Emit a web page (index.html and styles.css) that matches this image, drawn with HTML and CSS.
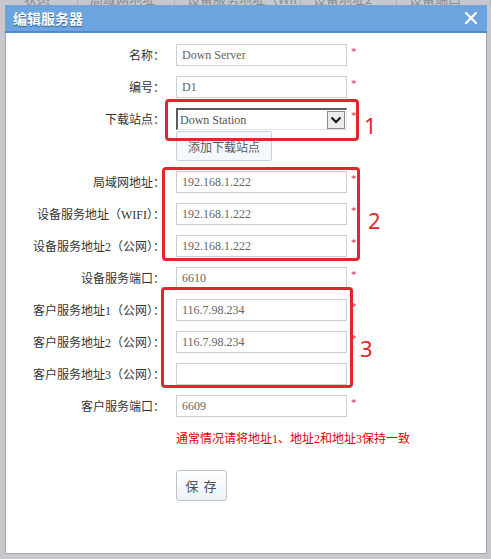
FILE: index.html
```html
<!DOCTYPE html>
<html lang="zh-CN">
<head>
<meta charset="utf-8">
<title>编辑服务器</title>
<link rel="stylesheet" href="styles.css">
</head>
<body>
<div class="bgstrip">
  <div class="bgrow">
    <span class="bgcell c1">状态</span>
    <span class="bgcell c2">局域网地址</span>
    <span class="bgcell c3">设备服务地址（WIFI</span>
    <span class="bgcell c4">设备地址2</span>
    <span class="bgcell c5">设备端口</span>
  </div>
</div>
<div class="dialog">
  <div class="titlebar">
    <span class="title">编辑服务器</span>
    <svg class="close" width="12" height="12" viewBox="0 0 12 12"><path d="M1 1 L11 11 M11 1 L1 11" stroke="#fff" stroke-width="2.2" stroke-linecap="square"/></svg>
  </div>
  <div class="form">
    <div class="row first">
      <label class="lbl">名称：</label>
      <div class="input">Down Server</div>
      <span class="req">*</span>
    </div>
    <div class="row">
      <label class="lbl">编号：</label>
      <div class="input">D1</div>
      <span class="req">*</span>
    </div>
    <div class="row">
      <label class="lbl">下载站点：</label>
      <div class="select"><span class="seltext">Down Station</span><span class="arrow"><svg width="12" height="8" viewBox="0 0 12 8"><path d="M1.5 1.5 L6 6 L10.5 1.5" fill="none" stroke="#111" stroke-width="2"/></svg></span></div>
      <span class="req">*</span>
    </div>
    <div class="row addrow">
      <span class="lbl"></span>
      <button class="btn add">添加下载站点</button>
    </div>
    <div class="row after-add">
      <label class="lbl">局域网地址：</label>
      <div class="input">192.168.1.222</div>
      <span class="req">*</span>
    </div>
    <div class="row">
      <label class="lbl">设备服务地址（WIFI）：</label>
      <div class="input">192.168.1.222</div>
      <span class="req">*</span>
    </div>
    <div class="row">
      <label class="lbl">设备服务地址2（公网）：</label>
      <div class="input">192.168.1.222</div>
      <span class="req">*</span>
    </div>
    <div class="row">
      <label class="lbl">设备服务端口：</label>
      <div class="input">6610</div>
      <span class="req">*</span>
    </div>
    <div class="row">
      <label class="lbl">客户服务地址1（公网）：</label>
      <div class="input">116.7.98.234</div>
      <span class="req">*</span>
    </div>
    <div class="row">
      <label class="lbl">客户服务地址2（公网）：</label>
      <div class="input">116.7.98.234</div>
      <span class="req">*</span>
    </div>
    <div class="row">
      <label class="lbl">客户服务地址3（公网）：</label>
      <div class="input"></div>
    </div>
    <div class="row">
      <label class="lbl">客户服务端口：</label>
      <div class="input">6609</div>
      <span class="req">*</span>
    </div>
    <div class="row hintrow">
      <span class="lbl"></span>
      <span class="hint">通常情况请将地址1、地址2和地址3保持一致</span>
    </div>
    <div class="row saverow">
      <span class="lbl"></span>
      <button class="btn save">保 存</button>
    </div>
  </div>
</div>
<div class="mark box1"></div>
<div class="mark box2"></div>
<div class="mark box3"></div>
<span class="num n1">1</span>
<span class="num n2">2</span>
<span class="num n3">3</span>
</body>
</html>
```
FILE: styles.css
```css
html, body {
  margin: 0;
  padding: 0;
}
body {
  width: 491px;
  height: 559px;
  overflow: hidden;
  background: #c6c8cb;
  font-family: "Liberation Serif", "Noto Sans CJK SC", serif;
  font-size: 12px;
  color: #333;
  position: relative;
}
.bgstrip {
  height: 5px;
  overflow: hidden;
}
.bgrow {
  margin-top: -9px;
  height: 16px;
  display: flex;
  font-size: 13px;
  color: #8a8c90;
  line-height: 16px;
  font-family: "Noto Sans CJK SC", sans-serif;
}
.bgcell {
  border-right: 1px solid #b0b2b6;
  padding-left: 12px;
  box-sizing: border-box;
  white-space: nowrap;
  overflow: hidden;
}
.c1 { width: 78px; padding-left: 24px; }
.c2 { width: 97px; }
.c3 { width: 126px; }
.c4 { width: 96px; }
.c5 { width: 94px; }

.dialog {
  margin-left: 5px;
  width: 482px;
  height: 549px;
  box-sizing: border-box;
  background: #fff;
  border: 1px solid #a4a6aa;
  border-top: none;
}
.titlebar {
  height: 28px;
  margin: 0 -1px;
  box-sizing: border-box;
  background: #6ca4df;
  border-bottom: 2px solid #4f8bcc;
  display: flex;
  align-items: center;
  justify-content: space-between;
  padding: 0 10px 0 8px;
}
.title {
  color: #fff;
  font-family: "Noto Sans CJK SC", sans-serif;
  font-weight: bold;
  font-size: 14px;
  text-shadow: 0 1px 1px #2d5a8a;
  line-height: 20px;
}
.close { display: block; }

.form {
  display: flex;
  flex-direction: column;
  padding-top: 11px;
}
.row {
  display: flex;
  align-items: center;
  height: 22px;
  margin-top: 10px;
}
.row.first { margin-top: 0; }
.lbl {
  width: 159px;
  margin-right: 11px;
  text-align: right;
  white-space: nowrap;
  color: #333;
  flex: none;
}
.input {
  width: 171px;
  height: 22px;
  box-sizing: border-box;
  border: 1px solid #cfcfcf;
  padding-left: 5px;
  line-height: 20px;
  color: #666;
  flex: none;
}
.req {
  align-self: flex-start;
  margin-left: 4px;
  margin-top: 1px;
  color: #e0303a;
  font-size: 11px;
  line-height: 12px;
}
.select {
  width: 171px;
  height: 22px;
  box-sizing: border-box;
  border-top: 2px solid #5c5c5c;
  border-left: 2px solid #5c5c5c;
  border-right: 1px solid #e4e4e4;
  border-bottom: 1px solid #e4e4e4;
  display: flex;
  align-items: center;
  justify-content: space-between;
  color: #555;
  flex: none;
}
.seltext { padding-left: 2px; line-height: 18px; }
.arrow {
  width: 18px;
  height: 18px;
  box-sizing: border-box;
  border: 1px solid #8a8a8a;
  background: #ececec;
  display: flex;
  align-items: center;
  justify-content: center;
  margin-right: 1px;
}
.addrow {
  margin-top: 1px;
  height: 30px;
}
.after-add { margin-top: 10px; }
.btn {
  font-family: "Noto Sans CJK SC", sans-serif;
  padding: 0;
  cursor: pointer;
}
.add {
  width: 96px;
  height: 30px;
  background: #f4f7fb;
  border: 1px solid #ccd1d8;
  border-radius: 2px;
  color: #5a5a5a;
  font-size: 12px;
}
.hintrow {
  margin-top: 13px;
  height: 16px;
}
.hint {
  color: #e00000;
  white-space: nowrap;
}
.saverow {
  margin-top: 24px;
  height: 31px;
}
.save {
  width: 51px;
  height: 31px;
  background: linear-gradient(#ffffff, #eef2f7);
  border: 1px solid #b9c2ce;
  border-radius: 3px;
  color: #4a4f58;
  font-size: 13px;
  letter-spacing: 1px;
}

.mark {
  position: absolute;
  border: 3px solid #e2262b;
  border-radius: 4px;
  box-sizing: border-box;
}
.box1 { left: 165px; top: 99px; width: 194px; height: 42px; }
.box2 { left: 162px; top: 167px; width: 198px; height: 94px; }
.box3 { left: 161px; top: 287px; width: 192px; height: 101px; }
.num {
  position: absolute;
  color: #e2262b;
  font-family: "Noto Sans", sans-serif;
  font-size: 22px;
  line-height: 22px;
}
.n1 { left: 364px; top: 114px; }
.n2 { left: 368px; top: 209px; }
.n3 { left: 360px; top: 337px; }
```
